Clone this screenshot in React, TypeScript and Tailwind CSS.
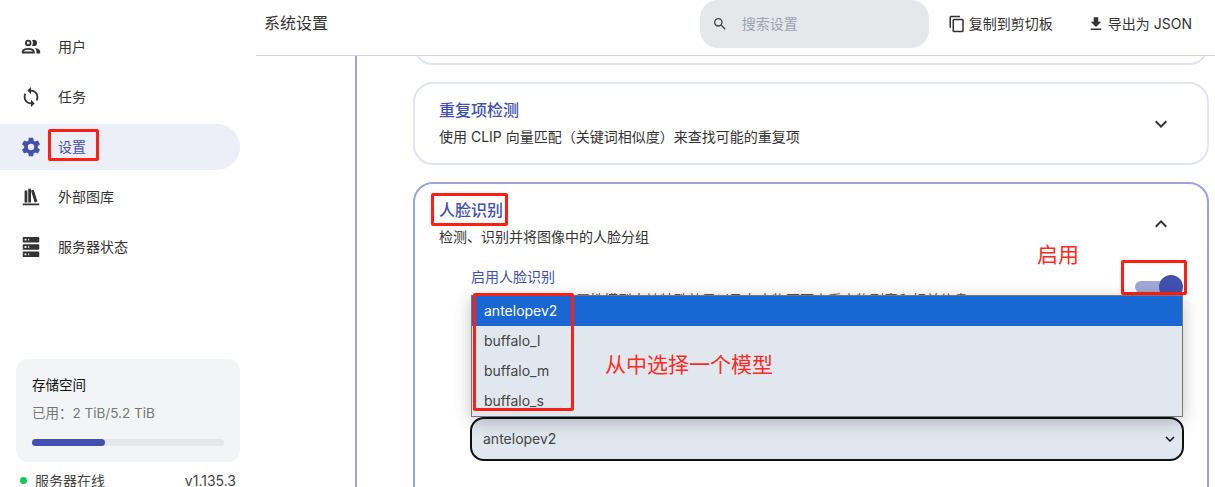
import React from "react";

const FONT = "font-['Inter','Noto_Sans_CJK_SC',sans-serif]";

const ICONS = {
  users:
    "M13.07 10.41A5 5 0 0 0 13.07 4.59A3.39 3.39 0 0 1 15 4A3.5 3.5 0 0 1 15 11A3.39 3.39 0 0 1 13.07 10.41M5.5 7.5A3.5 3.5 0 1 1 9 11A3.5 3.5 0 0 1 5.5 7.5M7.5 7.5A1.5 1.5 0 1 0 9 6A1.5 1.5 0 0 0 7.5 7.5M16 17V19H2V17S2 13 9 13 16 17 16 17M14 17C13.86 16.22 12.67 15 9 15S4.07 16.31 4 17M15.95 13A5.32 5.32 0 0 1 18 17V19H22V17S22 13.37 15.94 13Z",
  sync: "M12,18A6,6 0 0,1 6,12C6,11 6.25,10.03 6.7,9.2L5.24,7.74C4.46,8.97 4,10.43 4,12A8,8 0 0,0 12,20V23L16,19L12,15M12,4V1L8,5L12,9V6A6,6 0 0,1 18,12C18,13 17.75,13.97 17.3,14.8L18.76,16.26C19.54,15.03 20,13.57 20,12A8,8 0 0,0 12,4Z",
  cog: "M12,15.5A3.5,3.5 0 0,1 8.5,12A3.5,3.5 0 0,1 12,8.5A3.5,3.5 0 0,1 15.5,12A3.5,3.5 0 0,1 12,15.5M19.43,12.97C19.47,12.65 19.5,12.33 19.5,12C19.5,11.67 19.47,11.34 19.43,11L21.54,9.37C21.73,9.22 21.78,8.95 21.66,8.73L19.66,5.27C19.54,5.05 19.27,4.96 19.05,5.05L16.56,6.05C16.04,5.66 15.5,5.32 14.87,5.07L14.5,2.42C14.46,2.18 14.25,2 14,2H10C9.75,2 9.54,2.18 9.5,2.42L9.13,5.07C8.5,5.32 7.96,5.66 7.44,6.05L4.95,5.05C4.73,4.96 4.46,5.05 4.34,5.27L2.34,8.73C2.21,8.95 2.27,9.22 2.46,9.37L4.57,11C4.53,11.34 4.5,11.67 4.5,12C4.5,12.33 4.53,12.65 4.57,12.97L2.46,14.63C2.27,14.78 2.21,15.05 2.34,15.27L4.34,18.73C4.46,18.95 4.73,19.03 4.95,18.95L7.44,17.94C7.96,18.34 8.5,18.68 9.13,18.93L9.5,21.58C9.54,21.82 9.75,22 10,22H14C14.25,22 14.46,21.82 14.5,21.58L14.87,18.93C15.5,18.67 16.04,18.34 16.56,17.94L19.05,18.95C19.27,19.03 19.54,18.95 19.66,18.73L21.66,15.27C21.78,15.05 21.73,14.78 21.54,14.63L19.43,12.97Z",
  bookshelf: "M9 3V18H12V3H9M12 5L16 18L19 17L15 4L12 5M5 5V18H8V5H5M3 19V21H21V19H3Z",
  server:
    "M4,1H20A1,1 0 0,1 21,2V6A1,1 0 0,1 20,7H4A1,1 0 0,1 3,6V2A1,1 0 0,1 4,1M4,9H20A1,1 0 0,1 21,10V14A1,1 0 0,1 20,15H4A1,1 0 0,1 3,14V10A1,1 0 0,1 4,9M4,17H20A1,1 0 0,1 21,18V22A1,1 0 0,1 20,23H4A1,1 0 0,1 3,22V18A1,1 0 0,1 4,17M9,5H10V3H9V5M9,13H10V11H9V13M9,21H10V19H9V21M5,3V5H7V3H5M5,11V13H7V11H5M5,19V21H7V19H5Z",
  copy: "M19,21H8V7H19M19,5H8A2,2 0 0,0 6,7V21A2,2 0 0,0 8,23H19A2,2 0 0,0 21,21V7A2,2 0 0,0 19,5M16,1H4A2,2 0 0,0 2,3V17H4V3H16V1Z",
  download: "M5,20H19V18H5M19,9H15V3H9V9H5L12,16L19,9Z",
  search:
    "M9.5,3A6.5,6.5 0 0,1 16,9.5C16,11.11 15.41,12.59 14.44,13.73L14.71,14H15.5L20.5,19L19,20.5L14,15.5V14.71L13.73,14.44C12.59,15.41 11.11,16 9.5,16A6.5,6.5 0 0,1 3,9.5A6.5,6.5 0 0,1 9.5,3M9.5,5C7,5 5,7 5,9.5C5,12 7,14 9.5,14C12,14 14,12 14,9.5C14,7 12,5 9.5,5Z",
  down: "M7.41,8.58L12,13.17L16.59,8.58L18,10L12,16L6,10L7.41,8.58Z",
  up: "M7.41,15.41L12,10.83L16.59,15.41L18,14L12,8L6,14L7.41,15.41Z",
};

function Icon({ name, className }: { name: keyof typeof ICONS; className: string }) {
  return (
    <svg viewBox="0 0 24 24" fill="currentColor" className={className}>
      <path d={ICONS[name]} />
    </svg>
  );
}

const NAV: { label: string; icon: keyof typeof ICONS; active?: boolean }[] = [
  { label: "用户", icon: "users" },
  { label: "任务", icon: "sync" },
  { label: "设置", icon: "cog", active: true },
  { label: "外部图库", icon: "bookshelf" },
  { label: "服务器状态", icon: "server" },
];

function Sidebar() {
  return (
    <aside className="flex w-[256px] shrink-0 flex-col pr-4">
      <nav className="mt-6 flex flex-col gap-1">
        {NAV.map((item) => (
          <div
            key={item.label}
            className={`flex h-[46px] items-center gap-[16px] rounded-r-full pl-[20px] text-sm ${
              item.active ? "bg-[#eceef8] text-[#4250af]" : "text-[#333]"
            }`}
          >
            <Icon name={item.icon} className="size-[22px]" />
            {item.label}
          </div>
        ))}
      </nav>

      <div className="mt-auto ml-4 rounded-xl bg-[#f3f4f6] px-4 pt-[17px] pb-4">
        <p className="text-[13.5px] leading-[18px] text-[#111]">存储空间</p>
        <p className="mt-[10px] text-[13.5px] leading-[18px] text-[#777]">已用：2 TiB/5.2 TiB</p>
        <div className="mt-[17px] h-[7px] rounded-full bg-[#e5e7eb]">
          <div className="h-full w-[38%] rounded-full bg-[#4250af]" />
        </div>
      </div>

      <div className="mt-[9px] -mb-[3px] flex h-[19px] items-center pr-1 pl-5 text-sm text-[#444]">
        <span className="size-[7px] rounded-full bg-[#10c85a]" />
        <span className="ml-2">服务器在线</span>
        <span className="ml-auto">v1.135.3</span>
      </div>
    </aside>
  );
}

function Header() {
  return (
    <header className="flex h-[56px] shrink-0 items-start border-b border-[#d4d4d8] pl-[8px] text-[#333]">
      <h1 className="mt-[11px] text-base leading-6 font-normal">系统设置</h1>
      <div className="ml-auto flex h-12 w-[229px] items-center rounded-[18px] bg-[#e5e7eb] pl-[12px] text-sm text-[#9ca3af]">
        <Icon name="search" className="size-4 text-[#444]" />
        <span className="ml-[14px]">搜索设置</span>
      </div>
      <div className="mt-[15px] ml-[19px] flex h-[18px] items-center gap-[3px] text-sm">
        <Icon name="copy" className="size-[18px]" />
        复制到剪切板
      </div>
      <div className="mt-[15px] mr-[23px] ml-[34px] flex h-[18px] items-center gap-[3px] text-sm">
        <Icon name="download" className="size-[18px]" />
        导出为 JSON
      </div>
    </header>
  );
}

function Card({
  title,
  desc,
  open,
  children,
}: {
  title?: string;
  desc?: string;
  open?: boolean;
  children?: React.ReactNode;
}) {
  return (
    <section
      className={`rounded-[20px] border-2 bg-white pr-[34px] pl-[24px] ${
        open ? "border-[#9da3db]" : "border-[#e1e4f5]"
      }`}
    >
      <div className="flex h-[79px] items-center justify-between">
        <div className="pb-[2px]">
          <h2 className="text-base leading-6 font-medium text-[#4250af]">{title}</h2>
          <p className="mt-[5px] text-sm leading-5 text-[#333]">{desc}</p>
        </div>
        <Icon name={open ? "up" : "down"} className="size-6 text-[#333]" />
      </div>
      {children}
    </section>
  );
}

function Options() {
  const options = ["antelopev2", "buffalo_l", "buffalo_m", "buffalo_s"];
  return (
    <div className="absolute top-[28px] right-[1px] left-[1px] z-10 border border-[#777] bg-[#e1e7ef] text-sm text-[#444] shadow-[0_4px_16px_rgba(0,0,0,0.25)]">
      {options.map((option, i) => (
        <div
          key={option}
          className={`flex h-[30px] items-center pl-3 ${i === 0 ? "bg-[#1967d2] text-white" : ""}`}
        >
          {option}
        </div>
      ))}
    </div>
  );
}

function FaceSettings() {
  return (
    <div className="relative mt-[4px] -mr-[11px] ml-[31px] h-[240px]">
      <div className="flex items-start justify-between">
        <div>
          <p className="pl-[1px] text-sm leading-5 text-[#4250af]">启用人脸识别</p>
          <p className="mt-[5px] pl-[106px] text-sm leading-[16px] text-[#555]">
            属性模型支持特殊效果以及在人物页面查看人物列表和相关信息
          </p>
        </div>
        <div className="relative mt-[14px] mr-[1px] h-[12px] w-[48px]">
          <div className="h-[12px] w-[40px] rounded-full bg-[#a1a7d7]" />
          <div className="absolute -top-[6px] right-0 size-6 rounded-full bg-[#4250af]" />
        </div>
      </div>
      <Options />
      <div className="mt-[109px] flex h-[44px] items-center justify-between rounded-[14px] border-2 border-[#111] bg-[#e1e7ef] pr-[3px] pl-[11px] text-sm text-[#444]">
        antelopev2
        <Icon name="down" className="size-[18px] text-[#111]" />
      </div>
    </div>
  );
}

// Red marks drawn over the screenshot
function Annotations() {
  const box = "absolute rounded-[2px] border-[3px] border-[#ff1f14]";
  const text = "absolute leading-none font-normal text-[#ff2a1f]";
  return (
    <>
      <div className={`${box} top-[129px] left-[48px] h-[32px] w-[51px]`} />
      <div className={`${box} top-[193px] left-[431px] h-[33px] w-[77px]`} />
      <div className={`${box} top-[260px] left-[1121px] h-[35px] w-[66px]`} />
      <div className={`${box} z-20 top-[293px] left-[473px] h-[118px] w-[101px]`} />
      <span className={`${text} top-[244px] left-[1037px] text-[21px]`}>启用</span>
      <span className={`${text} z-20 top-[354px] left-[605px] text-[21px]`}>从中选择一个模型</span>
    </>
  );
}

export default function App() {
  return (
    <div className={`${FONT} relative flex h-[487px] w-[1215px] overflow-hidden bg-white`}>
      <Sidebar />
      <main className="flex min-w-0 flex-1 flex-col">
        <Header />
        <div className="min-h-0 flex-1 overflow-hidden pr-[6px] pl-[99px]">
          <div className="flex h-full flex-col gap-[17px] border-l-2 border-[#9da3db] pl-[56px]">
            <div className="-mt-[74px] shrink-0">
              <Card title="" desc="" />
            </div>
            <div className="shrink-0">
              <Card title="重复项检测" desc="使用 CLIP 向量匹配（关键词相似度）来查找可能的重复项" />
            </div>
            <div className="shrink-0">
              <Card title="人脸识别" desc="检测、识别并将图像中的人脸分组" open>
                <FaceSettings />
              </Card>
            </div>
          </div>
        </div>
      </main>
      <Annotations />
    </div>
  );
}
